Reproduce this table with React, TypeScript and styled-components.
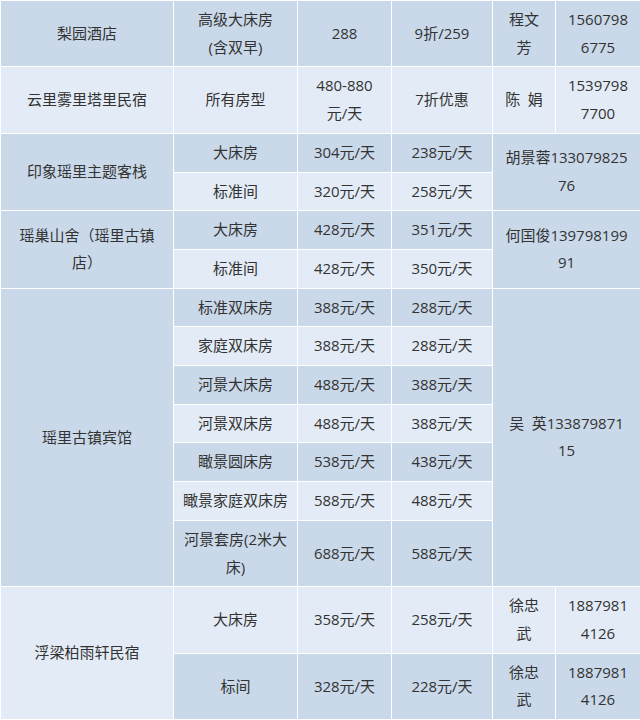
import React from "react";
import styled, { createGlobalStyle } from "styled-components";

const GlobalStyle = createGlobalStyle`
  html, body {
    margin: 0;
    padding: 0;
    background: #fff;
  }
  body {
    font-family: "Open Sans", "Noto Sans CJK SC", sans-serif;
  }
`;

const Table = styled.table`
  width: 640px;
  border-collapse: collapse;
  table-layout: fixed;
  font-size: 15px;
  line-height: 27.7px;
  color: #333;
`;

const Col = styled.col<{ $w: number }>`
  width: ${(p) => p.$w}px;
`;

const Row = styled.tr`
  &:nth-child(odd) td {
    background: #cad9ea;
  }
  &:nth-child(even) td {
    background: #e3ecf6;
  }
`;

const Cell = styled.td<{ $nowrap?: boolean }>`
  border: 1px solid #fff;
  padding: 5px 8px;
  text-align: center;
  vertical-align: middle;
  white-space: ${(p) => (p.$nowrap ? "nowrap" : "pre-line")};
`;

interface Room {
  type: string;
  price: string;
  deal: string;
  contact?: string;
  phone?: string;
}

interface Hotel {
  name: string;
  rooms: Room[];
  // one contact spanning every room row, name and phone in one cell
  sharedContact?: string;
}

const COLS = [173, 124, 94, 101, 63, 85];

const hotels: Hotel[] = [
  {
    name: "梨园酒店",
    rooms: [
      {
        type: "高级大床房\n(含双早)",
        price: "288",
        deal: "9折/259",
        contact: "程文\n芳",
        phone: "1560798\n6775",
      },
    ],
  },
  {
    name: "云里雾里塔里民宿",
    rooms: [
      {
        type: "所有房型",
        price: "480-880\n元/天",
        deal: "7折优惠",
        contact: "陈\u2002娟",
        phone: "1539798\n7700",
      },
    ],
  },
  {
    name: "印象瑶里主题客栈",
    sharedContact: "胡景蓉133079825\n76",
    rooms: [
      { type: "大床房", price: "304元/天", deal: "238元/天" },
      { type: "标准间", price: "320元/天", deal: "258元/天" },
    ],
  },
  {
    name: "瑶巢山舍（瑶里古镇\n店）",
    sharedContact: "何国俊139798199\n91",
    rooms: [
      { type: "大床房", price: "428元/天", deal: "351元/天" },
      { type: "标准间", price: "428元/天", deal: "350元/天" },
    ],
  },
  {
    name: "瑶里古镇宾馆",
    sharedContact: "吴\u2002英133879871\n15",
    rooms: [
      { type: "标准双床房", price: "388元/天", deal: "288元/天" },
      { type: "家庭双床房", price: "388元/天", deal: "288元/天" },
      { type: "河景大床房", price: "488元/天", deal: "388元/天" },
      { type: "河景双床房", price: "488元/天", deal: "388元/天" },
      { type: "瞰景圆床房", price: "538元/天", deal: "438元/天" },
      { type: "瞰景家庭双床房", price: "588元/天", deal: "488元/天" },
      { type: "河景套房(2米大\n床)", price: "688元/天", deal: "588元/天" },
    ],
  },
  {
    name: "浮梁柏雨轩民宿",
    rooms: [
      {
        type: "大床房",
        price: "358元/天",
        deal: "258元/天",
        contact: "徐忠\n武",
        phone: "1887981\n4126",
      },
      {
        type: "标间",
        price: "328元/天",
        deal: "228元/天",
        contact: "徐忠\n武",
        phone: "1887981\n4126",
      },
    ],
  },
];

function App() {
  return (
    <>
      <GlobalStyle />
      <Table>
        <colgroup>
          {COLS.map((w, i) => (
            <Col key={i} $w={w} />
          ))}
        </colgroup>
        <tbody>
          {hotels.map((hotel) =>
            hotel.rooms.map((room, i) => (
              <Row key={hotel.name + i}>
                {i === 0 && (
                  <Cell rowSpan={hotel.rooms.length}>{hotel.name}</Cell>
                )}
                <Cell>{room.type}</Cell>
                <Cell>{room.price}</Cell>
                <Cell>{room.deal}</Cell>
                {hotel.sharedContact ? (
                  i === 0 && (
                    <Cell rowSpan={hotel.rooms.length} colSpan={2}>
                      {hotel.sharedContact}
                    </Cell>
                  )
                ) : (
                  <>
                    <Cell $nowrap={!room.contact?.includes("\n")}>
                      {room.contact}
                    </Cell>
                    <Cell>{room.phone}</Cell>
                  </>
                )}
              </Row>
            ))
          )}
        </tbody>
      </Table>
    </>
  );
}

export default App;
